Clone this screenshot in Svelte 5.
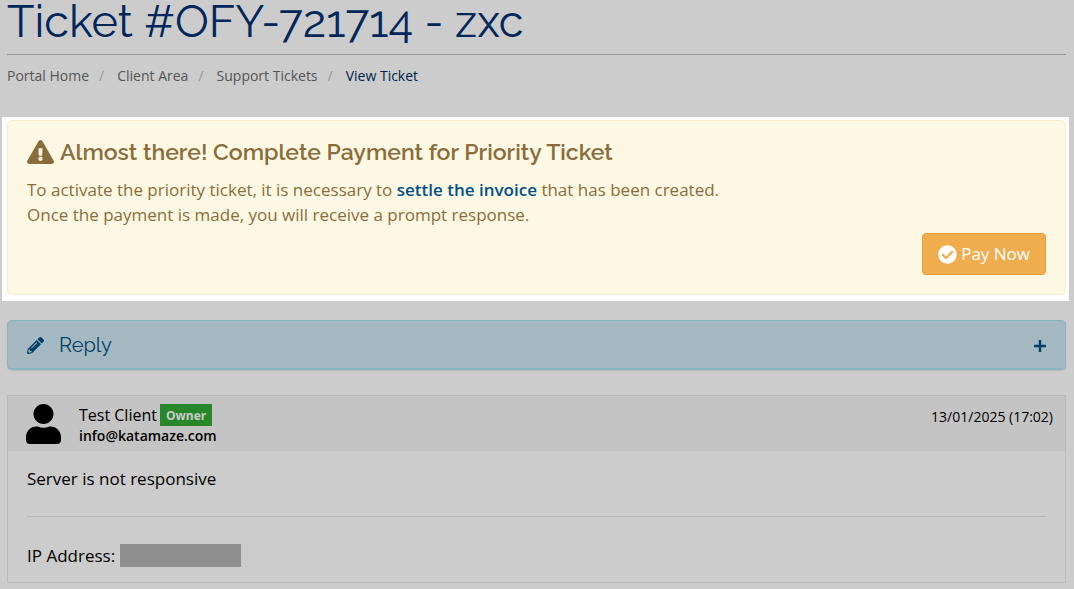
<script>
    let showReply = false;

    const breadcrumbs = ["Portal Home", "Client Area", "Support Tickets"];

    const ticket = {
        id: "OFY-721714",
        subject: "zxc",
        client: "Test Client",
        role: "Owner",
        email: "info@katamaze.com",
        date: "13/01/2025 (17:02)",
        message: "Server is not responsive"
    };

    function toggleReply() {
        showReply = !showReply;
    }
</script>

<main class="page">
    <h1 class="page-title">Ticket #{ticket.id} - {ticket.subject}</h1>

    <nav aria-label="Breadcrumb">
        <ol class="breadcrumb">
            {#each breadcrumbs as crumb}
                <li><a href="#top">{crumb}</a></li>
            {/each}
            <li class="active">View Ticket</li>
        </ol>
    </nav>

    <section class="spotlight">
        <div class="alert">
            <h2 class="alert-title">
                <svg class="alert-icon" viewBox="0 0 576 512" aria-hidden="true">
                    <path fill="currentColor" d="M569.5 440c18.500 32-4.700 72-41.600 72H48.100c-36.900 0-60-40.100-41.600-72L246.400 24c18.500-32 64.700-32 83.200 0l239.900 416zM288 354c-25.400 0-46 20.600-46 46s20.600 46 46 46 46-20.600 46-46-20.600-46-46-46zm-43.700-165.300l7.400 136c.300 6.400 5.600 11.300 12 11.300h48.600c6.400 0 11.700-5 12-11.300l7.400-136c.400-6.900-5.100-12.700-12-12.700h-63.400c-6.900 0-12.400 5.800-12 12.700z" />
                </svg>
                Almost there! Complete Payment for Priority Ticket
            </h2>
            <p class="alert-text">
                To activate the priority ticket, it is necessary to <a href="#invoice">settle the invoice</a> that has been created.<br>
                Once the payment is made, you will receive a prompt response.
            </p>
            <div class="alert-actions">
                <button class="pay-btn" type="button">
                    <svg viewBox="0 0 512 512" aria-hidden="true">
                        <path fill="currentColor" d="M504 256c0 137-111 248-248 248S8 393 8 256 119 8 256 8s248 111 248 248zM227.300 387.300l184-184c6.200-6.200 6.200-16.400 0-22.600l-22.600-22.600c-6.200-6.200-16.400-6.200-22.600 0L216 308.100l-70.100-70.100c-6.200-6.200-16.400-6.200-22.600 0l-22.600 22.600c-6.200 6.200-6.200 16.400 0 22.600l104 104c6.200 6.300 16.400 6.300 22.600.100z" />
                    </svg>
                    Pay Now
                </button>
            </div>
        </div>
    </section>

    <button class="reply-bar" type="button" aria-expanded={showReply} on:click={toggleReply}>
        <svg class="reply-icon" viewBox="0 0 512 512" aria-hidden="true">
            <path fill="currentColor" fill-rule="evenodd" d="M498 142l-46 46c-5 5-12 5-17 0L324 77c-5-5-5-12 0-17l46-46c19-19 49-19 68 0l60 60c19 19 19 49 0 68zM284 100L22 362 0 484c-3 16 12 31 28 28l122-22 262-262c5-5 5-12 0-17L301 100c-5-5-12-5-17 0zM124 340c-6-6-6-14 0-20l154-154c6-6 14-6 20 0s6 14 0 20L144 340c-6 6-14 6-20 0zM88 424h48v36l-65 12-31-31 12-65h36v48z" />
        </svg>
        <span class="reply-label">Reply</span>
        <svg class="toggle-icon" viewBox="0 0 12 12" aria-hidden="true">
            <path stroke="currentColor" stroke-width="2.400" d={showReply ? "M0 6h12" : "M0 6h12M6 0v12"} />
        </svg>
    </button>

    <article class="ticket">
        <header class="ticket-header">
            <svg class="avatar" viewBox="0 0 448 512" aria-hidden="true">
                <path fill="currentColor" d="M224 256c70.700 0 128-57.300 128-128S294.700 0 224 0 96 57.300 96 128s57.300 128 128 128zm89.600 32h-16.700c-22.200 10.200-46.900 16-72.900 16s-50.600-5.800-72.900-16h-16.700C60.200 288 0 348.200 0 422.400V464c0 26.500 21.500 48 48 48h352c26.500 0 48-21.500 48-48v-41.600c0-74.200-60.200-134.400-134.400-134.400z" />
            </svg>
            <div class="author">
                <div class="author-name">
                    {ticket.client}
                    <span class="role">{ticket.role}</span>
                </div>
                <div class="author-email">{ticket.email}</div>
            </div>
            <time class="date">{ticket.date}</time>
        </header>
        <div class="ticket-body">
            <p>{ticket.message}</p>
            <hr>
            <p class="ip">IP Address: <span class="redacted"></span></p>
        </div>
    </article>
</main>

<style>
    :global(body) {
        background-color: #ccc;
        font-family: "Open Sans", "Liberation Sans", sans-serif;
        color: #000;
    }

    .page {
        padding: 0 8px 6px 7px;
    }

    .page-title {
        margin: 0;
        padding-bottom: 10px;
        border-bottom: 1px solid #999;
        font: 400 45px/44px Raleway, Lato, sans-serif;
        color: #00265a;
    }

    .breadcrumb {
        display: flex;
        margin: 11px 0 31px;
        padding: 0;
        list-style: none;
        font-size: 14px;
        line-height: 20px;
    }

    .breadcrumb li + li::before {
        content: "/";
        padding: 0 13px 0 10px;
        color: #999;
    }

    .breadcrumb a {
        color: #555;
        text-decoration: none;
    }

    .breadcrumb .active {
        color: #00234b;
    }

    .spotlight {
        margin: 0 -3px 19px -5px;
        padding: 3px 3px 6px 5px;
        background-color: #fff;
    }

    .alert {
        padding: 16px 19px 19px;
        border: 1px solid #faebcc;
        border-radius: 5px;
        background-color: #fdf8e3;
        color: #8a6d3b;
    }

    .alert-title {
        display: flex;
        align-items: center;
        gap: 6px;
        margin: 0 0 10px;
        font: 600 23px/30px Raleway, Lato, sans-serif;
    }

    .alert-icon {
        width: 27px;
        height: 24px;
    }

    .alert-text {
        margin: 0 0 6px;
        font-size: 17px;
        line-height: 25px;
    }

    .alert-text a {
        color: #00508a;
        font-weight: 600;
        text-decoration: none;
    }

    .alert-actions {
        display: flex;
        justify-content: flex-end;
    }

    .pay-btn {
        display: flex;
        align-items: center;
        gap: 4px;
        padding: 8px 15px;
        border: 1px solid #ed9c33;
        border-radius: 4px;
        background-color: #f0ad4e;
        color: #fff;
        font-family: inherit;
        font-size: 17px;
        line-height: 24px;
    }

    .pay-btn svg {
        width: 19px;
        height: 19px;
    }

    .reply-bar {
        display: flex;
        align-items: center;
        width: 100%;
        padding: 10px 19px 8px;
        border: 1px solid #8ab6c0;
        border-bottom-width: 2px;
        border-radius: 5px;
        background-color: #a5b9c2;
        box-shadow: 0 1px 2px rgba(0, 0, 0, 0.1);
        color: #003f66;
    }

    .reply-icon {
        width: 17px;
        height: 17px;
    }

    .reply-label {
        margin-left: 15px;
        font: 400 20px/29px Raleway, Lato, sans-serif;
    }

    .toggle-icon {
        width: 12px;
        height: 12px;
        margin-left: auto;
    }

    .ticket {
        margin-top: 25px;
        border: 1px solid #b9b9b9;
    }

    .ticket-header {
        display: flex;
        align-items: flex-start;
        padding: 8px 12px 6px 18px;
        background-color: #c4c4c4;
    }

    .avatar {
        width: 35px;
        height: 40px;
        margin-right: 18px;
    }

    .author-name {
        display: flex;
        align-items: center;
        gap: 3px;
        font-size: 16px;
        line-height: 21px;
    }

    .role {
        padding: 1px 6px 0;
        background-color: #28862b;
        color: #ccc;
        font-size: 12px;
        font-weight: 700;
    }

    .author-email {
        font-size: 14px;
        font-weight: 600;
        line-height: 19px;
    }

    .date {
        margin: 3px 0 0 auto;
        font-size: 14px;
        line-height: 20px;
    }

    .ticket-body {
        padding: 15px 19px 14px;
        font-size: 17px;
        line-height: 25px;
    }

    .ticket-body p {
        margin: 0;
    }

    .ticket-body hr {
        margin: 25px 0 26px;
        border: none;
        border-top: 1px solid #b8b8b8;
    }

    .ip {
        display: flex;
        align-items: center;
        gap: 5px;
    }

    .redacted {
        width: 121px;
        height: 23px;
        background-color: #8f8f8f;
    }
</style>
